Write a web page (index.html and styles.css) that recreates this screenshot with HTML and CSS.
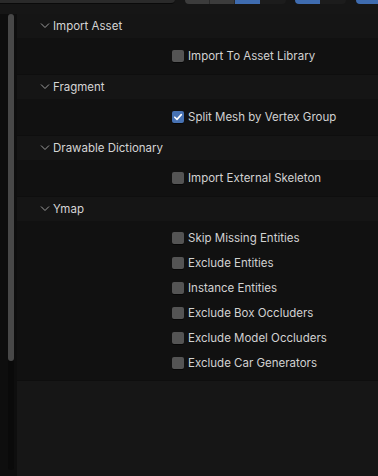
FILE: index.html
```html
<!DOCTYPE html>
<html lang="en">
<head>
  <meta charset="UTF-8">
  <title>Import Settings</title>
  <link rel="stylesheet" href="styles.css">
</head>
<body>
  <div class="topbar">
    <div class="tb tb-wide"></div>
    <div class="tb-group g1">
      <div class="tb seg-gray"></div>
      <div class="tb seg-gray"></div>
      <div class="tb seg-blue"></div>
      <div class="tb seg-dark"></div>
    </div>
    <div class="tb-group g2">
      <div class="tb seg-blue"></div>
      <div class="tb seg-dark"></div>
    </div>
    <div class="tb-group g3">
      <div class="tb seg-blue"></div>
    </div>
  </div>

  <div class="main">
    <div class="side">
      <div class="track"><div class="thumb"></div></div>
    </div>
    <div class="panels">
      <div class="panel">
        <div class="panel-head"><svg class="chev" viewBox="0 0 10 6" width="10" height="6"><path d="M1 0.5 L5 4.5 L9 0.5" fill="none" stroke="#9c9c9c" stroke-width="1"/></svg>Import Asset</div>
        <div class="panel-body">
          <label class="opt"><span class="box"></span>Import To Asset Library</label>
        </div>
      </div>
      <div class="panel">
        <div class="panel-head"><svg class="chev" viewBox="0 0 10 6" width="10" height="6"><path d="M1 0.5 L5 4.5 L9 0.5" fill="none" stroke="#9c9c9c" stroke-width="1"/></svg>Fragment</div>
        <div class="panel-body">
          <label class="opt"><span class="box checked"><svg viewBox="0 0 12 12" width="12" height="12"><path d="M2.8 6.2 L5 8.4 L9.3 3.6" fill="none" stroke="#fff" stroke-width="1.6" stroke-linecap="round" stroke-linejoin="round"/></svg></span>Split Mesh by Vertex Group</label>
        </div>
      </div>
      <div class="panel">
        <div class="panel-head"><svg class="chev" viewBox="0 0 10 6" width="10" height="6"><path d="M1 0.5 L5 4.5 L9 0.5" fill="none" stroke="#9c9c9c" stroke-width="1"/></svg>Drawable Dictionary</div>
        <div class="panel-body">
          <label class="opt"><span class="box"></span>Import External Skeleton</label>
        </div>
      </div>
      <div class="panel">
        <div class="panel-head"><svg class="chev" viewBox="0 0 10 6" width="10" height="6"><path d="M1 0.5 L5 4.5 L9 0.5" fill="none" stroke="#9c9c9c" stroke-width="1"/></svg>Ymap</div>
        <div class="panel-body list">
          <label class="opt"><span class="box"></span>Skip Missing Entities</label>
          <label class="opt"><span class="box"></span>Exclude Entities</label>
          <label class="opt"><span class="box"></span>Instance Entities</label>
          <label class="opt"><span class="box"></span>Exclude Box Occluders</label>
          <label class="opt"><span class="box"></span>Exclude Model Occluders</label>
          <label class="opt"><span class="box"></span>Exclude Car Generators</label>
        </div>
      </div>
      <div class="empty"></div>
    </div>
  </div>
</body>
</html>
```

FILE: styles.css
```css
html, body {
  margin: 0;
  padding: 0;
  height: 100%;
}
body {
  font-family: Inter, "Noto Sans", sans-serif;
  font-size: 11.5px;
  color: #d6d6d6;
  background-color: #161616;
  overflow: hidden;
}
.topbar {
  height: 14px;
  display: flex;
  align-items: flex-start;
  background-color: #161616;
}
.tb {
  height: 4px;
}
.tb-wide {
  width: 175px;
  background-color: #2a2a2a;
  border-radius: 0 0 5px 0;
  border-bottom: 1px solid #0a0a0a;
  height: 3px;
}
.tb-group {
  display: flex;
  border-radius: 0 0 4px 4px;
  overflow: hidden;
}
.g1 { margin-left: 10px; }
.g2 { margin-left: 9px; }
.g3 { margin-left: 10px; flex: 1; border-radius: 0 0 0 4px; }
.seg-gray { width: 24px; background-color: #3c3c3c; border-right: 1px solid #2a2a2a; }
.seg-blue { width: 25px; background-color: #3f6cb0; }
.seg-dark { width: 26px; background-color: #1c1c1c; }
.g3 .seg-blue { width: 100%; }

.main {
  display: flex;
  height: 462px;
}
.side {
  width: 17px;
  background-color: #0e0e0e;
  padding: 0 0 6px 8px;
  box-sizing: border-box;
}
.track {
  width: 6px;
  height: 100%;
  background-color: #0a0a0a;
  border-radius: 3px;
}
.thumb {
  height: 347px;
  background-color: #484848;
  border-radius: 3px;
}
.panels {
  flex: 1;
  display: flex;
  flex-direction: column;
  background-color: #0e0e0e;
}
.panel-head {
  height: 24px;
  display: flex;
  align-items: center;
  background-color: #151515;
  padding-left: 23px;
  color: #d4d4d4;
}
.chev {
  margin: 0 3px 0 0;
}
.panel-body {
  background-color: #111111;
  padding: 0 0 0 155px;
  height: 36px;
  display: flex;
  flex-direction: column;
  justify-content: center;
  margin-bottom: 1px;
}
.panel-body.list {
  height: auto;
  padding-top: 4px;
  padding-bottom: 5px;
}
.opt {
  display: flex;
  align-items: center;
  height: 25px;
  color: #d2d2d2;
}
.box {
  width: 12px;
  height: 12px;
  border-radius: 2px;
  background-color: #545454;
  box-shadow: 0 1px 0 #070707;
  margin-right: 4px;
  display: flex;
}
.box.checked {
  background-color: #4772b3;
}
.empty {
  flex: 1;
  background-color: #161616;
}
```
